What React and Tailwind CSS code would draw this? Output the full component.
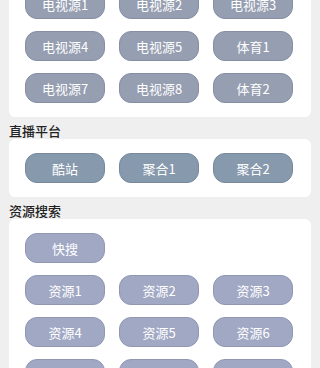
import React from "react";

const tvSources = ["电视源1", "电视源2", "电视源3", "电视源4", "电视源5", "体育1", "电视源7", "电视源8", "体育2"];
const platforms = ["酷站", "聚合1", "聚合2"];
const resources = ["资源1", "资源2", "资源3", "资源4", "资源5", "资源6", "资源7", "资源8", "资源9"];

const Pill = ({ label, tone }) => (
  <button className={`h-[30px] w-[80px] rounded-[12px] border text-[13px] leading-none text-white ${tone}`}>
    {label}
  </button>
);

const Card = ({ children }) => (
  <div className="rounded-[6px] bg-white py-[14px] pl-4">
    <div className="grid grid-cols-[80px_80px_80px] gap-x-[14px] gap-y-3">{children}</div>
  </div>
);

const Label = ({ text }) => (
  <div className="pt-[6px] text-[13px] font-medium leading-[16px] text-[#222]">{text}</div>
);

const App = () => {
  return (
    <div
      className="h-[368px] overflow-hidden bg-[#efefef] px-[9px]"
      style={{ fontFamily: '"Noto Sans CJK SC", "Noto Sans", sans-serif' }}
    >
      <div className="-mt-[25px]">
        {/* 电视源 */}
        <Card>
          {tvSources.map((s) => (
            <Pill key={s} label={s} tone="bg-[#969eb1] border-[#858ea3]" />
          ))}
        </Card>

        <Label text="直播平台" />
        <Card>
          {platforms.map((s) => (
            <Pill key={s} label={s} tone="bg-[#8799ad] border-[#76889d]" />
          ))}
        </Card>

        <Label text="资源搜索" />
        <Card>
          <Pill label="快搜" tone="bg-[#a1a8c4] border-[#9097b3]" />
          <div />
          <div />
          {resources.map((s) => (
            <Pill key={s} label={s} tone="bg-[#a1a8c4] border-[#9097b3]" />
          ))}
        </Card>
      </div>
    </div>
  );
};

export default App;
